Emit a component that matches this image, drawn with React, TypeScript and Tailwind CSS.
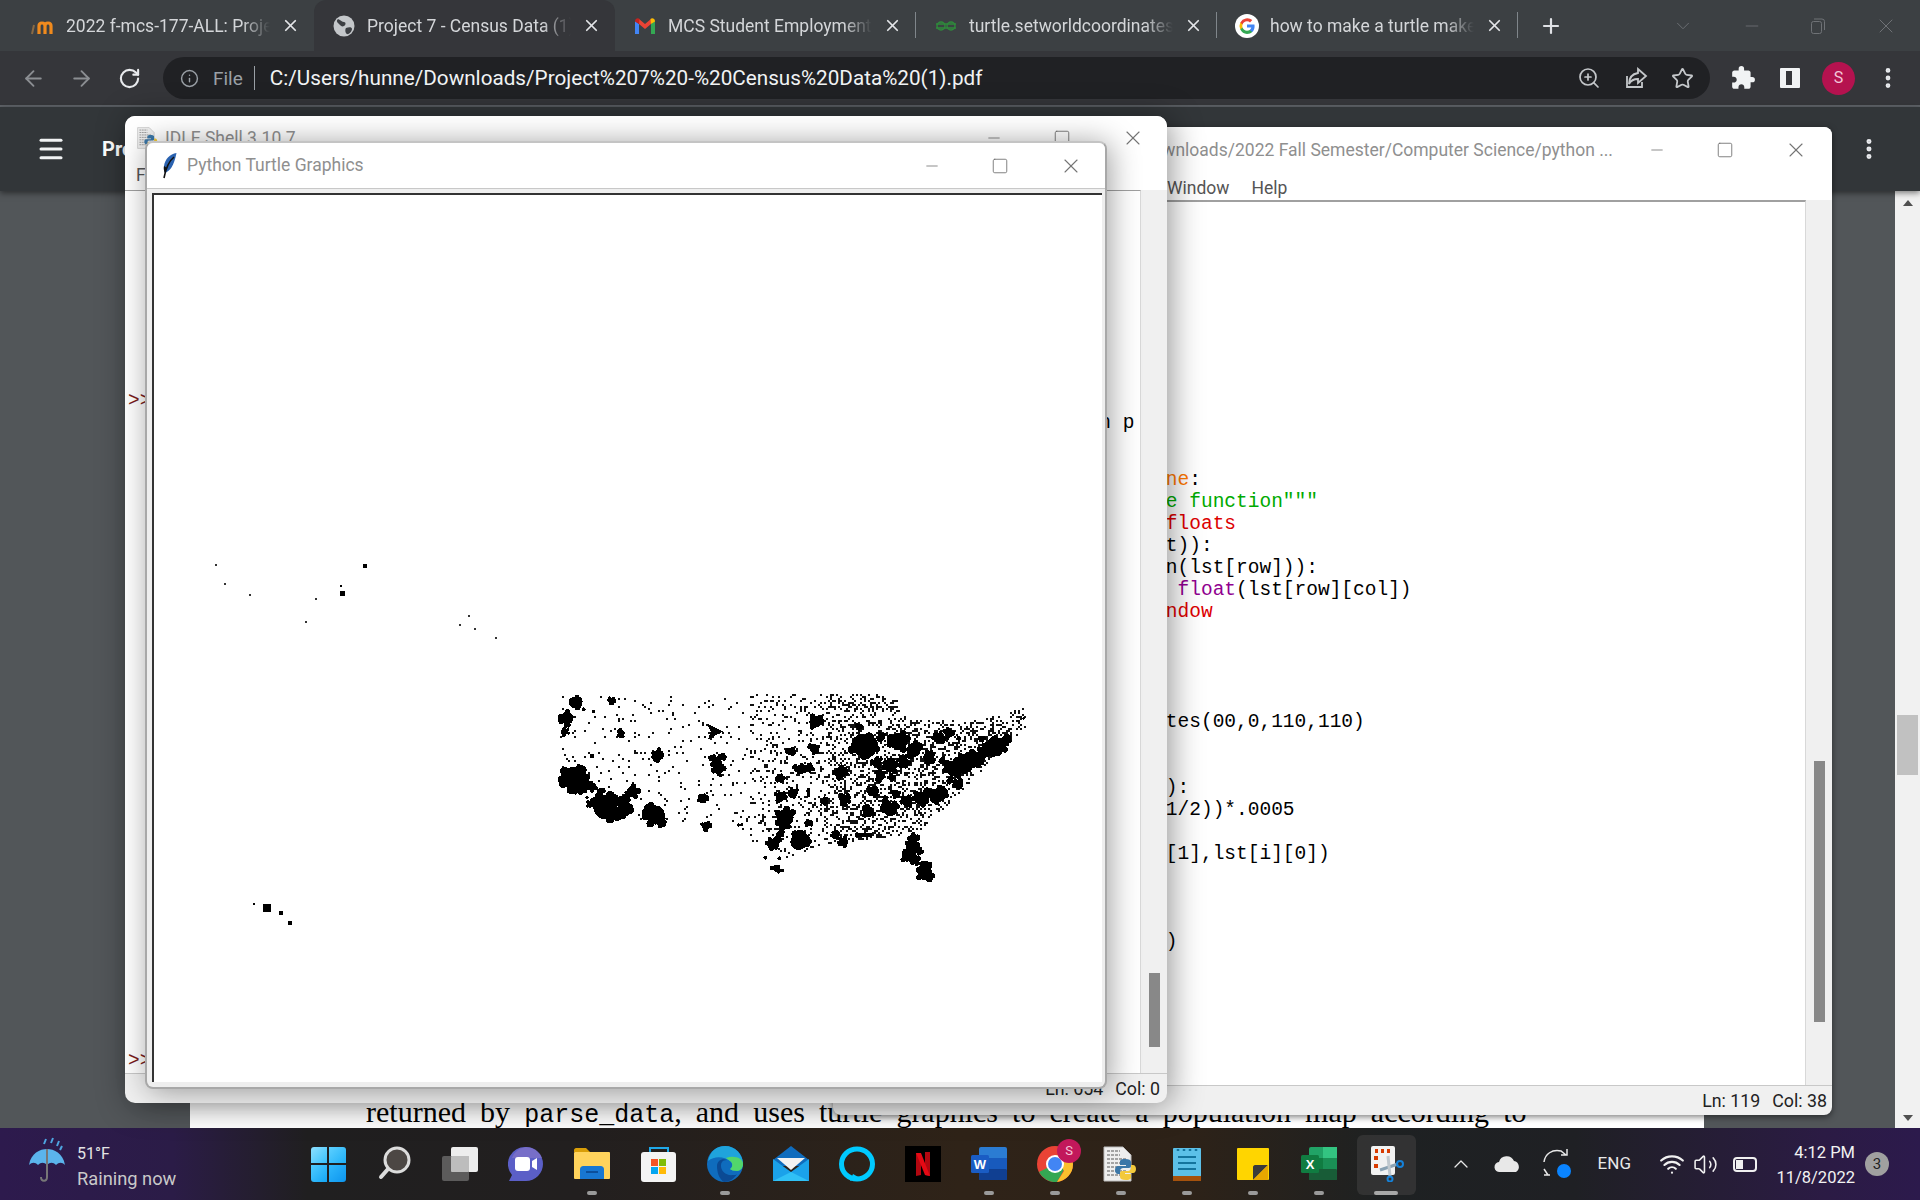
import { ArrowLeft, ArrowRight, ChevronDown, ChevronUp, Info, Menu, Minus, MoreVertical, Plus, RotateCw, Square, Star, Volume2, Wifi, X, ZoomIn } from "lucide-react";
import { MdExtension } from "react-icons/md";

const SANS = "font-['Roboto','Liberation_Sans',sans-serif]";
const MONO = "font-['Liberation_Mono',monospace]";

// ---- map data, coordinates are 3x page pixels relative to (540,670)
const BLOBS: [number, number, number][] = [
  [97, 97, 17], [75, 145, 19], [70, 185, 9], [65, 195, 6], [208, 92, 9], [125, 118, 6], [155, 125, 5], [238, 190, 10],
  [150, 258, 7], [350, 255, 16], [95, 325, 34], [75, 320, 18], [115, 345, 20], [120, 300, 14], [105, 355, 13],
  [150, 350, 12], [177, 362, 8], [272, 365, 17], [135, 382, 5], [142, 402, 8], [190, 412, 36], [240, 395, 18],
  [225, 435, 18], [245, 420, 21], [340, 435, 29], [355, 455, 13], [332, 402, 4], [483, 388, 12], [492, 468, 12],
  [497, 381, 5], [525, 280, 15], [510, 262, 8], [540, 262, 9], [530, 295, 16], [537, 318, 5],
  [730, 443, 25], [690, 522, 15], [715, 490, 9], [708, 505, 9], [770, 515, 25], [795, 510, 11], [705, 598, 9],
  [690, 595, 7], [720, 602, 6], [670, 563, 6], [712, 565, 6], [820, 155, 18], [745, 245, 11], [815, 235, 13],
  [785, 297, 13], [765, 297, 10], [805, 293, 10], [716, 327, 11], [715, 380, 14], [755, 368, 12], [895, 308, 17],
  [907, 388, 15], [960, 225, 32], [985, 225, 22], [1070, 215, 26], [1018, 200, 11], [1115, 240, 21], [1160, 262, 16],
  [1190, 205, 15], [1220, 190, 13], [1005, 278, 14], [1045, 290, 18], [1085, 275, 15], [1015, 318, 14], [1048, 322, 9],
  [990, 365, 14], [1060, 370, 11], [1135, 385, 19], [1190, 375, 21], [1160, 370, 13], [1045, 418, 21], [1095, 395, 15],
  [980, 425, 16], [1030, 390, 9], [1235, 295, 24], [1265, 280, 22], [1300, 265, 21], [1330, 245, 18], [1350, 235, 18], [1370, 225, 22],
  [1390, 210, 13], [1285, 270, 18], [1250, 345, 14], [1225, 330, 9], [1115, 505, 13], [1110, 535, 19], [1095, 560, 15], [1130, 540, 11],
  [1150, 610, 21], [1120, 570, 13], [1155, 585, 11], [1100, 545, 11], [1145, 590, 12], [880, 497, 11], [905, 515, 13], [848, 393, 9],
  [800, 460, 9], [1445, 145, 4], [590, 465, 5], [600, 465, 5], [1320, 205, 8], [1250, 205, 7], [1200, 270, 8], [950, 170, 8],
];

const OUTLINE = [[40, 70], [1050, 70], [1100, 150], [1300, 150], [1450, 110], [1450, 170], [1250, 370], [1150, 470], [1040, 500], [850, 520], [730, 560], [650, 530], [560, 440], [380, 470], [200, 420], [60, 300]];

function inside(px: number, py: number) {
  let hit = false;
  for (let i = 0, j = OUTLINE.length - 1; i < OUTLINE.length; j = i++) {
    const [xi, yi] = OUTLINE[i];
    const [xj, yj] = OUTLINE[j];
    if (yi > py !== yj > py && px < ((xj - xi) * (py - yi)) / (yj - yi) + xi) hit = !hit;
  }
  return hit;
}

let seed = 177;
function rand() {
  seed = (seed + 0x6d2b79f5) | 0;
  let t = Math.imul(seed ^ (seed >>> 15), 1 | seed);
  t = (t + Math.imul(t ^ (t >>> 7), 61 | t)) ^ t;
  return ((t ^ (t >>> 14)) >>> 0) / 4294967296;
}

function makeDots() {
  const out: [number, number][] = [];
  for (let i = 0; i < 16000 && out.length < 2400; i++) {
    const x = Math.round((40 + rand() * 1410) / 6) * 6;
    const y = Math.round((70 + rand() * 500) / 6) * 6;
    if (!inside(x, y)) continue;
    const odds = x < 620 ? 0.1 : x < 850 ? 0.32 : 0.85;
    if (rand() < odds) out.push([x, y]);
  }
  return out;
}
const DOTS = makeDots();

// little lumps round the bigger cities, so the outlines are not clean circles
const LUMPS: [number, number, number][] = BLOBS.flatMap(([x, y, r]) => {
  if (r < 8) return [];
  return Array.from({ length: 7 }, () => {
    const a = rand() * Math.PI * 2;
    return [x + Math.cos(a) * r * 1.05, y + Math.sin(a) * r * 1.05, r * 0.32 + 2] as [number, number, number];
  });
});

const ISLANDS: [number, number, number][] = [
  [214, 565, 1], [223, 584, 1], [248, 595, 1], [314, 599, 1], [304, 622, 1], [339, 586, 1.2], [340, 593, 2.5], [363, 566, 2],
  [467, 616, 1], [458, 625, 1], [473, 629, 1], [494, 638, 1], [252, 904, 1.3], [265, 908, 3.6], [279, 913, 2], [288, 923, 2],
];

function TurtleMap() {
  return (
    <svg className="w-full h-full" viewBox="152 195 948 887" shapeRendering="crispEdges">
      {ISLANDS.map(([x, y, r]) => (
        <rect key={`${x}-${y}`} x={x - r} y={y - r} width={r * 2} height={r * 2} fill={r > 1 ? "#000" : "#333"} />
      ))}
      <g transform="translate(540 670) scale(0.3333)">
        {DOTS.map(([x, y]) => (
          <rect key={`${x}:${y}`} x={x} y={y} width="6" height="6" fill="#111" />
        ))}
        {BLOBS.map(([x, y, r]) => (
          <circle key={`${x},${y}`} cx={x} cy={y} r={r} fill="#000" />
        ))}
        {LUMPS.map(([x, y, r], i) => (
          <circle key={i} cx={x} cy={y} r={r} fill="#000" />
        ))}
        <rect x="770" y="292" width="40" height="10" />
        <rect x="795" y="355" width="8" height="26" />
        <rect x="940" y="490" width="50" height="10" />
        <path d="M495 160 L543 184 L498 209 L506 184 Z" fill="#000" />
      </g>
    </svg>
  );
}

// ---- small logos
function MoodleIcon() {
  return (
    <svg width="24" height="20" viewBox="0 0 24 20">
      <path d="M1 18 L3 9" stroke="#8a6a45" strokeWidth="2" />
      <path d="M8 18v-8c0-4 6-4 6 0v8M14 10c0-4 6-4 6 0v8" fill="none" stroke="#f08a1d" strokeWidth="3.2" />
    </svg>
  );
}
function GlobeIcon() {
  return (
    <svg width="22" height="22" viewBox="0 0 22 22">
      <circle cx="11" cy="11" r="10.5" fill="#c4c7ca" />
      <path d="M5 4c3 1 4 3 6 3s2 3 0 4-3 0-5-2-3-3-1-5zM13 13c3-1 6-1 6 1s-3 6-5 5-2-5-1-6z" fill="#3c3f43" />
    </svg>
  );
}
function GmailIcon() {
  return (
    <svg width="22" height="18" viewBox="0 0 22 18">
      <path d="M1 4v13h4V7z" fill="#4285f4" />
      <path d="M21 4v13h-4V7z" fill="#34a853" />
      <path d="M5 2 L11 7 L17 2 V7 L11 12 L5 7z" fill="#ea4335" />
      <path d="M1 4.5c0-3 3-4 4.5-2.5L5 7z" fill="#c5221f" />
      <path d="M21 4.5c0-3-3-4-4.5-2.5L17 7z" fill="#fbbc04" />
    </svg>
  );
}
function SpectaclesIcon() {
  return (
    <svg width="22" height="14" viewBox="0 0 22 14" fill="none" stroke="#2f8a3c" strokeWidth="1.4">
      <path d="M1 5h20M1 9h20" />
      <ellipse cx="6" cy="7" rx="4" ry="4" />
      <ellipse cx="16" cy="7" rx="4" ry="4" />
    </svg>
  );
}
function GoogleIcon({ size = 24 }: { size?: number }) {
  return (
    <svg width={size} height={size} viewBox="0 0 24 24">
      <circle cx="12" cy="12" r="12" fill="#fff" />
      <path d="M19.6 12.2c0-.6-.1-1.100-.2-1.600H12v3h4.300a3.700 3.700 0 0 1-1.600 2.400v2h2.600c1.500-1.400 2.300-3.400 2.300-5.800z" fill="#4285f4" />
      <path d="M12 20c2.200 0 4-.7 5.300-2l-2.600-2c-.7.500-1.600.8-2.700.8-2.100 0-3.900-1.400-4.500-3.300H5.300v2.100A8 8 0 0 0 12 20z" fill="#34a853" />
      <path d="M7.500 13.500a4.800 4.800 0 0 1 0-3V8.400H5.300a8 8 0 0 0 0 7.200z" fill="#fbbc05" />
      <path d="M12 7.200c1.200 0 2.200.4 3 1.200l2.300-2.300A8 8 0 0 0 5.300 8.400l2.200 2.100C8.100 8.600 9.900 7.200 12 7.200z" fill="#ea4335" />
    </svg>
  );
}
function ShareIcon() {
  return (
    <svg width="24" height="24" viewBox="0 0 24 24" fill="none" stroke="#c4c7ca" strokeWidth="1.800">
      <path d="M3 10v11h15v-5" />
      <path d="M14 3l8 7-8 7v-4c-4 0-7 1-9 5 0-6 3-10 9-11z" />
    </svg>
  );
}
function RestoreIcon() {
  return (
    <svg width="16" height="18" viewBox="0 0 16 18" fill="none" stroke="currentColor" strokeWidth="1">
      <rect x="1.500" y="4.500" width="10" height="12" rx="2" />
      <path d="M4 2h8a2.500 2.500 0 0 1 2.500 2.500V13" />
    </svg>
  );
}
function Feather() {
  return (
    <svg width="18" height="26" viewBox="0 0 18 26">
      <path d="M15.500 0C9 1 4 6 3 13c-.5 3 0 5 1 7 5-2 9-7 11.500-20z" fill="#2a62b0" />
      <path d="M13 4C8 8 5 14 3 25" stroke="#111" strokeWidth="1.600" fill="none" />
      <path d="M3 13c-.5 3 0 5 1 7l2-5z" fill="#111" />
    </svg>
  );
}
function DocPython({ size = 24 }: { size?: number }) {
  return (
    <svg width={size} height={size} viewBox="0 0 36 36">
      <path d="M1 1h19l8 8v26H1z" fill="#eeeeee" stroke="#bdbdbd" />
      {[5, 9, 13, 17, 21, 25, 29].map((y) => (
        <path key={y} d={`M4 ${y}h${y < 12 ? 13 : 19}`} stroke="#8b8b8b" strokeWidth="1.300" strokeDasharray="3 1" />
      ))}
      <path d="M22 13c-5 0-5 2-5 3v3h6v1h-8c-2 0-3 2-3 4s1 4 3 4h2v-3c0-2 2-3 3-3h6c1 0 2-1 2-2v-4c0-2-2-3-6-3z" fill="#3b77a8" />
      <path d="M23 34c5 0 5-2 5-3v-3h-6v-1h8c2 0 3-2 3-4s-1-4-3-4h-2v3c0 2-2 3-3 3h-6c-1 0-2 1-2 2v4c0 2 2 3 6 3z" fill="#f3c93c" />
    </svg>
  );
}

// ---- taskbar icons, all on a 36 box
function WinIcon() {
  return (
    <div className="grid grid-cols-2 gap-[2px] w-[35px] h-[35px]">
      <div className="rounded-tl-[3px] bg-[linear-gradient(135deg,#8ee0ff,#39c0fb)]" />
      <div className="rounded-tr-[3px] bg-[linear-gradient(135deg,#5ed0ff,#1fb0f8)]" />
      <div className="rounded-bl-[3px] bg-[linear-gradient(135deg,#50ccff,#14a6f5)]" />
      <div className="rounded-br-[3px] bg-[linear-gradient(135deg,#2fb8fc,#0d95ee)]" />
    </div>
  );
}
const Ico = ({ children }: { children: React.ReactNode }) => (
  <svg width="36" height="36" viewBox="0 0 36 36">
    {children}
  </svg>
);
const TASK_ICONS: { key: string; node: React.ReactNode; dot?: boolean; active?: boolean }[] = [
  { key: "start", node: <WinIcon /> },
  {
    key: "search",
    node: (
      <Ico>
        <circle cx="21" cy="14" r="12" fill="#4c4744" stroke="#dcdcdc" strokeWidth="3" />
        <path d="M12 23 L5 31" stroke="#dcdcdc" strokeWidth="4" strokeLinecap="round" />
      </Ico>
    ),
  },
  {
    key: "view",
    node: (
      <Ico>
        <rect x="9" y="1" width="27" height="25" rx="2" fill="#ededed" />
        <rect x="0" y="10" width="27" height="25" rx="2" fill="#666" fillOpacity="0.85" />
        <rect x="9" y="10" width="18" height="16" rx="1" fill="#bdbdbd" />
      </Ico>
    ),
  },
  {
    key: "chat",
    node: (
      <Ico>
        <path d="M18 1a17 17 0 0 1 0 34H1l3-6A17 17 0 0 1 18 1z" fill="#5b5fc7" />
        <path d="M18 1a17 17 0 0 1 16 11H4A17 17 0 0 1 18 1z" fill="#8a78c8" fillOpacity="0.6" />
        <rect x="7" y="11" width="15" height="14" rx="3" fill="#fff" />
        <path d="M24 15l5-3v12l-5-3z" fill="#fff" />
      </Ico>
    ),
  },
  {
    key: "files",
    dot: true,
    node: (
      <Ico>
        <path d="M0 4c0-1 1-2 2-2h10l4 4h-16z" fill="#d99e08" />
        <rect x="0" y="6" width="36" height="27" rx="1" fill="#ffd35c" />
        <path d="M6 33v-10c0-2 2-3 3-3h18c1 0 3 1 3 3v10z" fill="#1877d2" />
        <rect x="12" y="25" width="12" height="2" fill="#0b4f9c" />
      </Ico>
    ),
  },
  {
    key: "store",
    node: (
      <Ico>
        <path d="M9 8V2h18v6" fill="none" stroke="#1fa8e8" strokeWidth="2" />
        <rect x="0" y="6" width="35" height="30" rx="3" fill="#f4f4f4" />
        <rect x="10" y="13" width="7" height="7" fill="#f35325" />
        <rect x="18" y="13" width="7" height="7" fill="#81bc06" />
        <rect x="10" y="21" width="7" height="7" fill="#05a6f0" />
        <rect x="18" y="21" width="7" height="7" fill="#ffba08" />
      </Ico>
    ),
  },
  {
    key: "edge",
    dot: true,
    node: (
      <Ico>
        <circle cx="18" cy="18" r="18" fill="#0f6cbd" />
        <path d="M1 15C3 5 10 0 18 0c10 0 18 8 18 18 0 3-2 7-6 7-3 0-6-1-7-2 3-2 3-6 0-8-5-4-15-6-22 0z" fill="#1fa4dc" />
        <path d="M36 18c0 3-2 7-6 7-3 0-6-1-7-2 3-2 3-6 0-8-1-1-3-2-4-3 8-3 17 0 17 6z" fill="#52d66b" />
        <path d="M10 20c0-5 5-8 10-6-5 0-6 3-6 6 0 5 5 10 12 9 2 0 3 0 4-1-3 5-8 8-13 8 -5-3-7-10-7-16z" fill="#0b4a94" />
      </Ico>
    ),
  },
  {
    key: "mail",
    node: (
      <Ico>
        <path d="M0 14L18 0l18 14v6H0z" fill="#0f6cbd" />
        <path d="M4 12h28L18 24z" fill="#f2f2f2" />
        <path d="M0 13v22h36V13L18 26z" fill="#1ba2ea" />
        <path d="M0 35L18 26l18 9z" fill="#30c1f6" />
      </Ico>
    ),
  },
  {
    key: "alexa",
    node: (
      <Ico>
        <ellipse cx="18" cy="18" rx="15.500" ry="15" fill="none" stroke="#00caff" strokeWidth="5" />
        <path d="M14 28l-3 7 10-3z" fill="#00caff" />
      </Ico>
    ),
  },
  {
    key: "netflix",
    node: (
      <Ico>
        <rect width="36" height="36" fill="#000" />
        <path d="M11 7h5v22l-5 1z" fill="#b20710" />
        <path d="M20 6h5v24l-5-1z" fill="#b20710" />
        <path d="M11 7h5l9 23-5-1z" fill="#e50914" />
      </Ico>
    ),
  },
  {
    key: "word",
    dot: true,
    node: (
      <Ico>
        <rect x="8" y="1" width="28" height="33" rx="2" fill="#2b7cd3" />
        <rect x="8" y="12" width="28" height="11" fill="#185abd" />
        <rect x="8" y="23" width="28" height="11" rx="1" fill="#103f91" />
        <rect x="0" y="9" width="18" height="18" rx="1.500" fill="#1a5cc4" />
        <text x="9" y="23" textAnchor="middle" fontSize="13" fontWeight="700" fill="#fff" fontFamily="Liberation Sans">W</text>
      </Ico>
    ),
  },
  {
    key: "chrome",
    dot: true,
    node: (
      <div className="relative">
        <Ico>
          <circle cx="18" cy="18" r="18" fill="#ea4335" />
          <path d="M2 26A18 18 0 0 0 20 36l8-14H10z" fill="#34a853" />
          <path d="M36 18a18 18 0 0 0-3-9H18l9 16-7 11A18 18 0 0 0 36 18z" fill="#fbc02d" />
          <circle cx="18" cy="18" r="9" fill="#fff" />
          <circle cx="18" cy="18" r="7" fill="#4285f4" />
        </Ico>
        <div className={`absolute -top-[7px] -right-[8px] w-[24px] h-[24px] rounded-full bg-[#c2185b] flex items-center justify-center text-[13px] text-[#f5c6d8] ${SANS}`}>S</div>
      </div>
    ),
  },
  { key: "python", dot: true, node: <DocPython size={36} /> },
  {
    key: "note",
    dot: true,
    node: (
      <Ico>
        <rect x="4" y="2" width="28" height="29" rx="1" fill="#5cc0e8" />
        <rect x="4" y="30" width="28" height="5" fill="#a5520d" />
        <path d="M9 11h18M9 17h18M9 23h18" stroke="#14749e" strokeWidth="2" />
        <path d="M9 3v2M15 3v2M21 3v2M27 3v2" stroke="#14749e" strokeWidth="2.500" />
      </Ico>
    ),
  },
  {
    key: "sticky",
    dot: true,
    node: (
      <Ico>
        <rect x="2" y="2" width="32" height="32" rx="1" fill="#ffd500" />
        <path d="M18 34V21c0-1 1-2 2-2h13z" fill="#3a3a3a" />
        <path d="M18 34L33 19v15z" fill="#e8a700" />
      </Ico>
    ),
  },
  {
    key: "excel",
    dot: true,
    node: (
      <Ico>
        <rect x="8" y="1" width="28" height="33" rx="2" fill="#21a366" />
        <rect x="22" y="1" width="14" height="11" fill="#33c481" />
        <rect x="8" y="12" width="14" height="11" fill="#107c41" />
        <rect x="22" y="12" width="14" height="11" fill="#1a8f55" />
        <rect x="8" y="23" width="28" height="11" rx="1" fill="#185c37" />
        <rect x="0" y="9" width="18" height="18" rx="1.500" fill="#107c41" />
        <text x="9" y="23" textAnchor="middle" fontSize="13" fontWeight="700" fill="#fff" fontFamily="Liberation Sans">X</text>
      </Ico>
    ),
  },
  {
    key: "snip",
    active: true,
    node: (
      <Ico>
        <rect x="3" y="0" width="24" height="29" rx="2" fill="#f2f2f2" />
        <path d="M7 5h3M13 5h3M19 5h3" stroke="#d83b01" strokeWidth="4" />
        <path d="M8 10v4M8 18v4" stroke="#d83b01" strokeWidth="4" />
        <path d="M12 24L30 18" stroke="#8aa2b3" strokeWidth="3" />
        <path d="M20 10L22 30" stroke="#c0c8ce" strokeWidth="3" />
        <circle cx="22" cy="33" r="2.500" fill="none" stroke="#1581d8" strokeWidth="2" />
        <circle cx="32" cy="18" r="3" fill="none" stroke="#1581d8" strokeWidth="2" />
      </Ico>
    ),
  },
];

// ---- chrome tabs
const TABS: { title: string; icon: React.ReactNode; active?: boolean; sep?: boolean }[] = [
  { title: "2022 f-mcs-177-ALL: Project 7 - Census", icon: <MoodleIcon /> },
  { title: "Project 7 - Census Data (1).pdf", icon: <GlobeIcon />, active: true },
  { title: "MCS Student Employment Office", icon: <GmailIcon />, sep: true },
  { title: "turtle.setworldcoordinates function", icon: <SpectaclesIcon />, sep: true },
  { title: "how to make a turtle make a dot", icon: <GoogleIcon />, sep: true },
];

function TabItem({ title, icon, active, sep }: (typeof TABS)[number]) {
  return (
    <div className={`relative flex items-center w-[301px] h-full shrink-0 pl-[18px] ${active ? "bg-[#35363a] rounded-t-[12px]" : ""}`}>
      <div className="w-[24px] flex justify-center shrink-0">{icon}</div>
      <div className="ml-[11px] mt-[2px] w-[204px] overflow-hidden whitespace-nowrap text-[17.500px] text-[#d4d6d9] [mask-image:linear-gradient(90deg,#000_86%,transparent)]">
        {title}
      </div>
      <X size={19} strokeWidth={2.200} className="ml-[11px] text-[#e3e5e8]" />
      {sep && <div className="absolute right-0 top-[12px] h-[26px] w-[1px] bg-[#80868b]" />}
    </div>
  );
}

function WindowButtons() {
  return (
    <div className="flex items-center gap-[50px] text-[#747474]">
      <Minus size={18} strokeWidth={1.100} />
      <Square size={18} strokeWidth={1.200} />
      <X size={24} strokeWidth={1.100} />
    </div>
  );
}

const CODE: { top: number; parts: [string, string][] }[] = [
  { top: 12, parts: [["              ne", "text-[#ff7700]"], [":", "text-black"]] },
  { top: 13, parts: [["              e function\"\"\"", "text-[#00aa00]"]] },
  { top: 14, parts: [["              floats", "text-[#dd0000]"]] },
  { top: 15, parts: [["              t)):", "text-black"]] },
  { top: 16, parts: [["              n(lst[row])):", "text-black"]] },
  { top: 17, parts: [["               ", ""], ["float", "text-[#900090]"], ["(lst[row][col])", "text-black"]] },
  { top: 18, parts: [["              ndow", "text-[#dd0000]"]] },
  { top: 23, parts: [["              tes(00,0,110,110)", "text-black"]] },
  { top: 26, parts: [["              ):", "text-black"]] },
  { top: 27, parts: [["              1/2))*.0005", "text-black"]] },
  { top: 29, parts: [["              [1],lst[i][0])", "text-black"]] },
  { top: 33, parts: [["              )", "text-black"]] },
];

function EditorWindow() {
  const lines = Array.from({ length: 40 }, (_, i) => CODE.find((c) => c.top === i));
  return (
    <div className={`absolute z-30 left-[833px] top-[127px] w-[999px] h-[988px] flex flex-col rounded-[8px] overflow-hidden bg-[#f0f0f0] shadow-[0_2px_6px_rgba(0,0,0,0.5)] ${SANS}`}>
      <div className="h-[44px] bg-white flex items-center shrink-0 pt-[2px]">
        <div className="w-[780px] text-right text-[17.500px] text-[#8f8f8f] whitespace-nowrap">Downloads/2022 Fall Semester/Computer Science/python ...</div>
        <div className="ml-[35px]"><WindowButtons /></div>
      </div>
      <div className="h-[29px] bg-white flex items-center shrink-0 pl-[334px] pt-[5px] gap-[22px] text-[17.500px] text-[#555]">
        <span>Window</span>
        <span>Help</span>
      </div>
      <div className="flex-1 flex min-h-0">
        <div className={`w-[973px] bg-white border-t-[2px] border-t-[#a0a0a0] border-r border-r-[#d8d8d8] overflow-hidden pl-[169px] pt-[3px] text-[19.500px] leading-[22px] ${MONO}`}>
          {lines.map((line, i) => (
            <div key={i} className="h-[22px] whitespace-pre">
              {line?.parts.map(([text, color]) => <span key={text} className={color}>{text}</span>)}
            </div>
          ))}
        </div>
        <div className="flex-1 pt-[561px] pl-[8px]">
          <div className="w-[11px] h-[261px] bg-[#888888]" />
        </div>
      </div>
      <div className="h-[30px] shrink-0 border-t border-[#c8c8c8] flex items-center justify-end pr-[5px] pt-[2px] gap-[12px] text-[17.800px] text-[#222]">
        <span>Ln: 119</span>
        <span>Col: 38</span>
      </div>
    </div>
  );
}

function ShellWindow() {
  const lines = Array.from({ length: 41 }, (_, i) => {
    if (i === 9 || i === 39) return <span className="text-[#7a1c1c]">{">>>"}</span>;
    if (i === 10) return <span className="text-black">{" ".repeat(83) + "n p"}</span>;
    return null;
  });
  return (
    <div className={`absolute z-30 left-[125px] top-[116px] w-[1042px] h-[987px] flex flex-col rounded-[10px] overflow-hidden bg-[#f0f0f0] shadow-[4px_2px_32px_rgba(0,0,0,0.42)] ${SANS}`}>
      <div className="h-[44px] bg-white flex items-center shrink-0 pl-[12px]">
        <DocPython size={22} />
        <span className="ml-[6px] text-[17.500px] text-[#8f8f8f]">IDLE Shell 3.10.7</span>
        <div className="ml-auto mr-[22px]"><WindowButtons /></div>
      </div>
      <div className="h-[30px] bg-white flex items-center shrink-0 pl-[11px] text-[17.500px] text-[#555]">File</div>
      <div className="flex-1 flex min-h-0">
        <div className={`w-[1016px] bg-white border-r border-r-[#d8d8d8] border-t border-t-[#a0a0a0] overflow-hidden pl-[3px] pt-[1px] text-[19.500px] leading-[22px] ${MONO}`}>
          {lines.map((line, i) => (
            <div key={i} className="h-[22px] whitespace-pre">{line}</div>
          ))}
        </div>
        <div className="flex-1 pt-[783px] pl-[8px]">
          <div className="w-[11px] h-[74px] bg-[#888888]" />
        </div>
      </div>
      <div className="h-[30px] shrink-0 border-t border-[#c8c8c8] flex items-center justify-end pr-[7px] pt-[2px] gap-[12px] text-[17.800px] text-[#222]">
        <span>Ln: 654</span>
        <span>Col: 0</span>
      </div>
    </div>
  );
}

function TurtleWindow() {
  return (
    <div className={`absolute z-30 left-[145px] top-[141px] w-[962px] h-[948px] flex flex-col rounded-[8px] overflow-hidden bg-[#eeeeee] border-[2px] border-[#a8a8a8] border-t-[#c4c4c4] shadow-[3px_2px_30px_rgba(0,0,0,0.38)] ${SANS}`}>
      <div className="h-[45px] bg-white flex items-center shrink-0 pl-[14px] pr-[22px]">
        <Feather />
        <span className="ml-[8px] text-[17.500px] text-[#8f8f8f]">Python Turtle Graphics</span>
        <div className="ml-auto"><WindowButtons /></div>
      </div>
      <div className="h-[5px] shrink-0 bg-[#efefef] border-t border-[#c8c8c8]" />
      <div className="w-[950px] ml-[5px] h-[889px] bg-white border-t-[2px] border-t-[#333] border-l-[2px] border-l-[#333]">
        <TurtleMap />
      </div>
    </div>
  );
}

export default function App() {
  return (
    <div className={`relative w-[1920px] h-[1200px] overflow-hidden flex flex-col bg-[#525659] ${SANS}`}>
      {/* tab strip */}
      <div className="h-[51px] shrink-0 bg-[#3c4043] flex items-center pl-[13px]">
        {TABS.map((t) => <TabItem key={t.title} {...t} />)}
        <Plus size={24} strokeWidth={2.200} className="ml-[21px] text-[#dfe1e5]" />
        <div className="ml-auto flex items-center gap-[48px] pr-[22px] text-[#6f7276]">
          <ChevronDown size={22} strokeWidth={1} />
          <Minus size={20} strokeWidth={1} />
          <RestoreIcon />
          <X size={24} strokeWidth={1} />
        </div>
      </div>

      {/* toolbar */}
      <div className="h-[56px] shrink-0 bg-[#35363a] border-b-[2px] border-[#5f6368] flex items-center pl-[21px] pr-[19px]">
        <ArrowLeft size={25} strokeWidth={1.800} className="text-[#8b8e92]" />
        <ArrowRight size={25} strokeWidth={1.800} className="ml-[23px] text-[#8b8e92]" />
        <RotateCw size={23} strokeWidth={2.200} className="ml-[24px] text-[#e8eaed]" />
        <div className="ml-[22px] w-[1547px] h-[42px] rounded-full bg-[#202124] flex items-center pl-[17px] pr-[16px]">
          <Info size={19} strokeWidth={1.800} className="text-[#9aa0a6]" />
          <span className="ml-[14px] mt-[2px] text-[19px] text-[#9aa0a6]">File</span>
          <div className="ml-[11px] w-[1px] h-[24px] bg-[#9aa0a6]" />
          <span className="ml-[15px] mt-[2px] text-[20.700px] text-[#f1f3f4]">C:/Users/hunne/Downloads/Project%207%20-%20Census%20Data%20(1).pdf</span>
          <div className="ml-auto flex items-center gap-[23px] text-[#c4c7ca]">
            <ZoomIn size={24} strokeWidth={1.700} />
            <ShareIcon />
            <Star size={23} strokeWidth={1.900} />
          </div>
        </div>
        <MdExtension size={26} className="ml-[20px] text-[#f1f3f4]" />
        <div className="ml-[24px] w-[20px] h-[20px] border-[3px] border-[#f1f3f4] border-l-[6px] border-r-[8px] rounded-[1px]" />
        <div className="ml-[22px] w-[33px] h-[33px] shrink-0 rounded-full bg-[#b5124f] flex items-center justify-center text-[16px] text-[#f3c6d8]">S</div>
        <MoreVertical size={26} strokeWidth={2.400} className="ml-[20px] text-[#e8eaed]" />
      </div>

      {/* pdf viewer header */}
      <div className="h-[84px] shrink-0 bg-[#323639] shadow-[0_2px_6px_rgba(0,0,0,0.5)] z-10 flex items-center pl-[36px] pr-[36px]">
        <Menu size={30} strokeWidth={2.400} className="text-[#f1f3f4]" />
        <span className="ml-[36px] text-[20px] font-bold text-white">Project 7</span>
        <MoreVertical size={26} strokeWidth={2.600} className="ml-auto mr-[2px] text-[#e8eaed]" />
      </div>

      {/* pdf page */}
      <div className="flex-1 flex min-h-0">
        <div className="flex-1 min-w-0 pl-[190px] pr-[191px]">
          <div className="h-full bg-white flex items-end pl-[176px] overflow-hidden">
            <div className="whitespace-nowrap text-[30px] leading-[32px] text-black font-['Liberation_Serif',serif] [word-spacing:6.600px] -mb-[4px]">
              returned by <span className={`${MONO} text-[25px] [word-spacing:0]`}>parse_data</span>, and uses turtle graphics to create a population map according to
            </div>
          </div>
        </div>
        <div className="w-[25px] shrink-0 bg-[#f1f1f1] flex flex-col items-center">
          <div className="mt-[9px] w-0 h-0 border-x-[5px] border-x-transparent border-b-[6px] border-b-[#505050]" />
          <div className="mt-[509px] w-[21px] h-[60px] bg-[#c1c1c1]" />
          <div className="mt-auto mb-[7px] w-0 h-0 border-x-[5px] border-x-transparent border-t-[6px] border-t-[#505050]" />
        </div>
      </div>

      {/* taskbar */}
      <div className="h-[72px] shrink-0 z-20 flex items-center bg-[linear-gradient(90deg,#2d1a4d_0%,#2b1c47_9%,#201f20_16%,#221f1f_30%,#2f2318_50%,#2d2218_62%,#1e2122_72%,#1f2024_82%,#2b1b44_95%,#2c1a4c_100%)]">
        <svg width="44" height="54" viewBox="0 0 44 54" className="ml-[26px] shrink-0">
          <path d="M3 28C5 16 14 12 21 12s16 4 18 16c-3-3-6-3-9 0-3-3-6-3-9 0-3-3-6-3-9 0-3-3-6-3-9 0z" fill="#5bb4ec" />
          <path d="M21 12v28c0 5-6 5-6 0" fill="none" stroke="#777" strokeWidth="2" />
          <path d="M20 2l-2 5M27 1l-2 5M33 4l-2 5M36 9l-2 4" stroke="#4ea5e0" strokeWidth="2" />
        </svg>
        <div className="ml-[7px] mt-[4px] w-[110px] shrink-0 text-[#e4e4e4]">
          <div className="text-[16px] leading-[24px]">51°F</div>
          <div className="text-[18.300px] leading-[25px] text-[#c9c9c9] whitespace-nowrap">Raining now</div>
        </div>
        <div className="ml-[108px] flex h-full shrink-0">
          {TASK_ICONS.map((t) => (
            <div key={t.key} className="relative w-[66.100px] h-full flex items-center justify-center">
              {t.active && <div className="absolute left-[4px] right-[3px] top-[7px] bottom-[5px] rounded-[6px] bg-[#3a3a3a]/70" />}
              <div className="relative">{t.node}</div>
              {t.dot && <div className="absolute bottom-[5px] left-[28px] w-[10px] h-[4px] rounded-full bg-[#9a9a9a]" />}
              {t.active && <div className="absolute bottom-[5px] left-[21px] w-[24px] h-[4px] rounded-full bg-[#a8a8a8]" />}
            </div>
          ))}
        </div>
        <ChevronUp size={24} strokeWidth={1.300} className="ml-[30px] text-[#e8e8e8] shrink-0" />
        <svg width="28" height="18" viewBox="0 0 28 18" className="ml-[21px] shrink-0">
          <path d="M6 17a5 5 0 0 1-1-10 8 8 0 0 1 15-1 6 6 0 0 1 2 11z" fill="#e8e8e8" />
        </svg>
        <svg width="32" height="34" viewBox="0 0 32 34" fill="none" className="ml-[20px] shrink-0" stroke="#e8e8e8" strokeWidth="1.500">
          <path d="M2 15C3 7 10 2 19 4l5 4M25 2v6h-6" />
          <path d="M2 22l4 6M2 28h6" />
          <circle cx="22" cy="24" r="7" fill="#0a84ff" stroke="none" />
        </svg>
        <span className="ml-[24px] text-[17px] text-[#e8e8e8] shrink-0">ENG</span>
        <Wifi size={26} strokeWidth={2} className="ml-[28px] text-[#f0f0f0] shrink-0" />
        <Volume2 size={25} strokeWidth={1.500} className="ml-[8px] text-[#f0f0f0] shrink-0" />
        <div className="ml-[15px] w-[24px] h-[15px] rounded-[4px] border-[2px] border-[#f0f0f0] p-[1px] shrink-0"><div className="w-[7px] h-full bg-[#f0f0f0]" /></div>
        <div className="ml-[10px] mt-[2px] text-right text-[#f2f2f2] text-[16.500px] leading-[25px] w-[88px] shrink-0">
          <div>4:12 PM</div>
          <div>11/8/2022</div>
        </div>
        <div className="ml-[10px] w-[24px] h-[24px] rounded-full bg-[#a0a0a0] flex items-center justify-center text-[15px] text-[#222] shrink-0">3</div>
      </div>

      <EditorWindow />
      <ShellWindow />
      <TurtleWindow />
    </div>
  );
}
